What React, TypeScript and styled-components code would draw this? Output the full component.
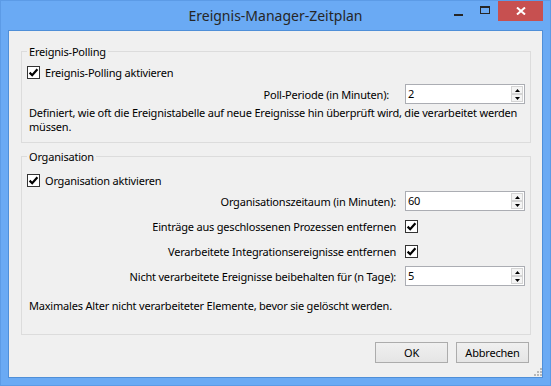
import React from 'react'
import styled, { createGlobalStyle } from 'styled-components'

const GlobalStyle = createGlobalStyle`
  html, body {
    margin: 0;
    padding: 0;
    background: #6aaaf4;
  }
  body {
    font-family: 'Segoe UI', 'Noto Sans', sans-serif;
    font-size: 11px;
    letter-spacing: -0.2px;
    color: #000;
  }
`

const Window = styled.div`
  box-sizing: border-box;
  width: 551px;
  height: 386px;
  background: #6aaaf4;
  border: 1px solid #5c9be6;
  padding: 0 7px 7px;
  display: flex;
  flex-direction: column;
`

const TitleBar = styled.div`
  height: 29px;
  flex: none;
  display: grid;
  grid-template-columns: 1fr auto 1fr;
  align-items: start;
`

const Title = styled.div`
  grid-column: 2;
  font-size: 14px;
  letter-spacing: 0;
  line-height: 20px;
  padding-top: 5px;
  color: #262626;
  white-space: nowrap;
`

const Caption = styled.div`
  grid-column: 3;
  justify-self: end;
  display: flex;
`

const CaptionButton = styled.div<{ $w: number; $close?: boolean }>`
  width: ${({ $w }) => $w}px;
  height: 20px;
  display: flex;
  align-items: center;
  justify-content: center;
  background: ${({ $close }) => ($close ? '#c75050' : 'transparent')};
`

const MinGlyph = styled.span`
  width: 9px;
  height: 2px;
  margin-top: 7px;
  background: #262626;
`

const MaxGlyph = styled.span`
  box-sizing: border-box;
  width: 10px;
  height: 8px;
  margin-top: -2px;
  border: 1px solid #262626;
  border-top-width: 2px;
`

const Client = styled.div`
  flex: 1;
  box-sizing: border-box;
  background: #f0f0f0;
  border: 1px solid #4f8fd8;
  padding: 13px 11px 0 12px;
  display: flex;
  flex-direction: column;
`

const Group = styled.fieldset<{ $top?: number }>`
  margin: ${({ $top }) => $top ?? 0}px 0 0;
  padding: 0;
  min-width: 0;
  border: 1px solid #dcdcdc;
`

const Legend = styled.legend`
  margin-left: 5px;
  padding: 0 2px;
  line-height: 15px;
`

const Body = styled.div<{ $pt: number; $pb: number }>`
  padding: ${({ $pt }) => $pt}px 5px ${({ $pb }) => $pb}px;
  display: flex;
  flex-direction: column;
`

const CheckLine = styled.label`
  display: flex;
  align-items: center;
  gap: 5px;
  height: 15px;
  line-height: 15px;
`

const Box = styled.span`
  box-sizing: border-box;
  width: 13px;
  height: 13px;
  flex: none;
  border: 1px solid #333;
  background: #fff;
  display: inline-flex;
  align-items: center;
  justify-content: center;
`

const FieldRow = styled.div`
  margin-top: 4px;
  display: flex;
  justify-content: flex-end;
  align-items: center;
  gap: 16px;
`

const Grid = styled.div`
  margin-top: 3px;
  display: grid;
  grid-template-columns: 1fr 120px;
  grid-auto-rows: 20px;
  row-gap: 5px;
  column-gap: 9px;
  align-items: center;
`

const Label = styled.span`
  text-align: right;
  line-height: 15px;
  white-space: nowrap;
`

const Note = styled.p<{ $top: number }>`
  margin: ${({ $top }) => $top}px 0 0 2px;
  line-height: 14px;
`

const SpinBox = styled.div`
  box-sizing: border-box;
  width: 120px;
  height: 20px;
  border: 1px solid #abadb3;
  background: #fff;
  display: flex;
`

const SpinValue = styled.span`
  flex: 1;
  padding-left: 2px;
  line-height: 18px;
`

const SpinButtons = styled.div`
  width: 12px;
  margin: 1px 1px 1px 0;
  display: flex;
  flex-direction: column;
`

const SpinButton = styled.div`
  flex: 1;
  box-sizing: border-box;
  border: 1px solid #d4d4d4;
  background: #f4f4f4;
  display: flex;
  align-items: center;
  justify-content: center;
`

const Footer = styled.div`
  flex: 1;
  margin-top: 7px;
  margin-right: -11px;
  padding-bottom: 1px;
  display: flex;
  justify-content: flex-end;
`

const Buttons = styled.div`
  display: flex;
  gap: 8px;
  align-self: flex-start;
`

const Button = styled.div<{ $w: number }>`
  box-sizing: border-box;
  width: ${({ $w }) => $w}px;
  height: 21px;
  border: 1px solid #acacac;
  background: linear-gradient(#f0f0f0, #e5e5e5);
  display: flex;
  align-items: center;
  justify-content: center;
  line-height: 15px;
`

const Grip = styled.svg`
  align-self: flex-end;
  margin-left: 5px;
  flex: none;
`

const Check = () => (
  <Box>
    <svg width="11" height="11" viewBox="0 0 11 11">
      <path d="M1.6 5.6 L4.2 8.2 L9.4 2.2" stroke="#000" strokeWidth="2.2" fill="none" />
    </svg>
  </Box>
)

const Spin = ({ value }: { value: string }) => (
  <SpinBox>
    <SpinValue>{value}</SpinValue>
    <SpinButtons>
      <SpinButton>
        <svg width="5" height="3" viewBox="0 0 5 3">
          <path d="M0 3 L2.5 0 L5 3 Z" fill="#000" />
        </svg>
      </SpinButton>
      <SpinButton>
        <svg width="5" height="3" viewBox="0 0 5 3">
          <path d="M0 0 L2.5 3 L5 0 Z" fill="#000" />
        </svg>
      </SpinButton>
    </SpinButtons>
  </SpinBox>
)

export default function App() {
  return (
    <>
      <GlobalStyle />
      <Window>
        <TitleBar>
          <Title>Ereignis-Manager-Zeitplan</Title>
          <Caption>
            <CaptionButton $w={26}>
              <MinGlyph />
            </CaptionButton>
            <CaptionButton $w={27}>
              <MaxGlyph />
            </CaptionButton>
            <CaptionButton $w={45} $close>
              <svg width="10" height="8" viewBox="0 0 10 8">
                <path d="M1 0.5 L9 7.5 M9 0.5 L1 7.5" stroke="#fff" strokeWidth="2" />
              </svg>
            </CaptionButton>
          </Caption>
        </TitleBar>
        <Client>
          <Group>
            <Legend>Ereignis-Polling</Legend>
            <Body $pt={6} $pb={8}>
              <CheckLine>
                <Check />
                Ereignis-Polling aktivieren
              </CheckLine>
              <FieldRow>
                <Label>Poll-Periode (in Minuten):</Label>
                <Spin value="2" />
              </FieldRow>
              <Note $top={2}>
                Definiert, wie oft die Ereignistabelle auf neue Ereignisse hin überprüft wird, die verarbeitet werden
                <br />
                müssen.
              </Note>
            </Body>
          </Group>
          <Group $top={6}>
            <Legend>Organisation</Legend>
            <Body $pt={9} $pb={21}>
              <CheckLine>
                <Check />
                Organisation aktivieren
              </CheckLine>
              <Grid>
                <Label>Organisationszeitaum (in Minuten):</Label>
                <Spin value="60" />
                <Label>Einträge aus geschlossenen Prozessen entfernen</Label>
                <Check />
                <Label>Verarbeitete Integrationsereignisse entfernen</Label>
                <Check />
                <Label>Nicht verarbeitete Ereignisse beibehalten für (n Tage):</Label>
                <Spin value="5" />
              </Grid>
              <Note $top={13}>Maximales Alter nicht verarbeiteter Elemente, bevor sie gelöscht werden.</Note>
            </Body>
          </Group>
          <Footer>
            <Buttons>
              <Button $w={73}>OK</Button>
              <Button $w={73}>Abbrechen</Button>
            </Buttons>
            <Grip width="8" height="8" viewBox="0 0 8 8">
              <g fill="#b8b8b8">
                <rect x="6" y="0" width="2" height="2" />
                <rect x="3" y="3" width="2" height="2" />
                <rect x="6" y="3" width="2" height="2" />
                <rect x="0" y="6" width="2" height="2" />
                <rect x="3" y="6" width="2" height="2" />
                <rect x="6" y="6" width="2" height="2" />
              </g>
            </Grip>
          </Footer>
        </Client>
      </Window>
    </>
  )
}
